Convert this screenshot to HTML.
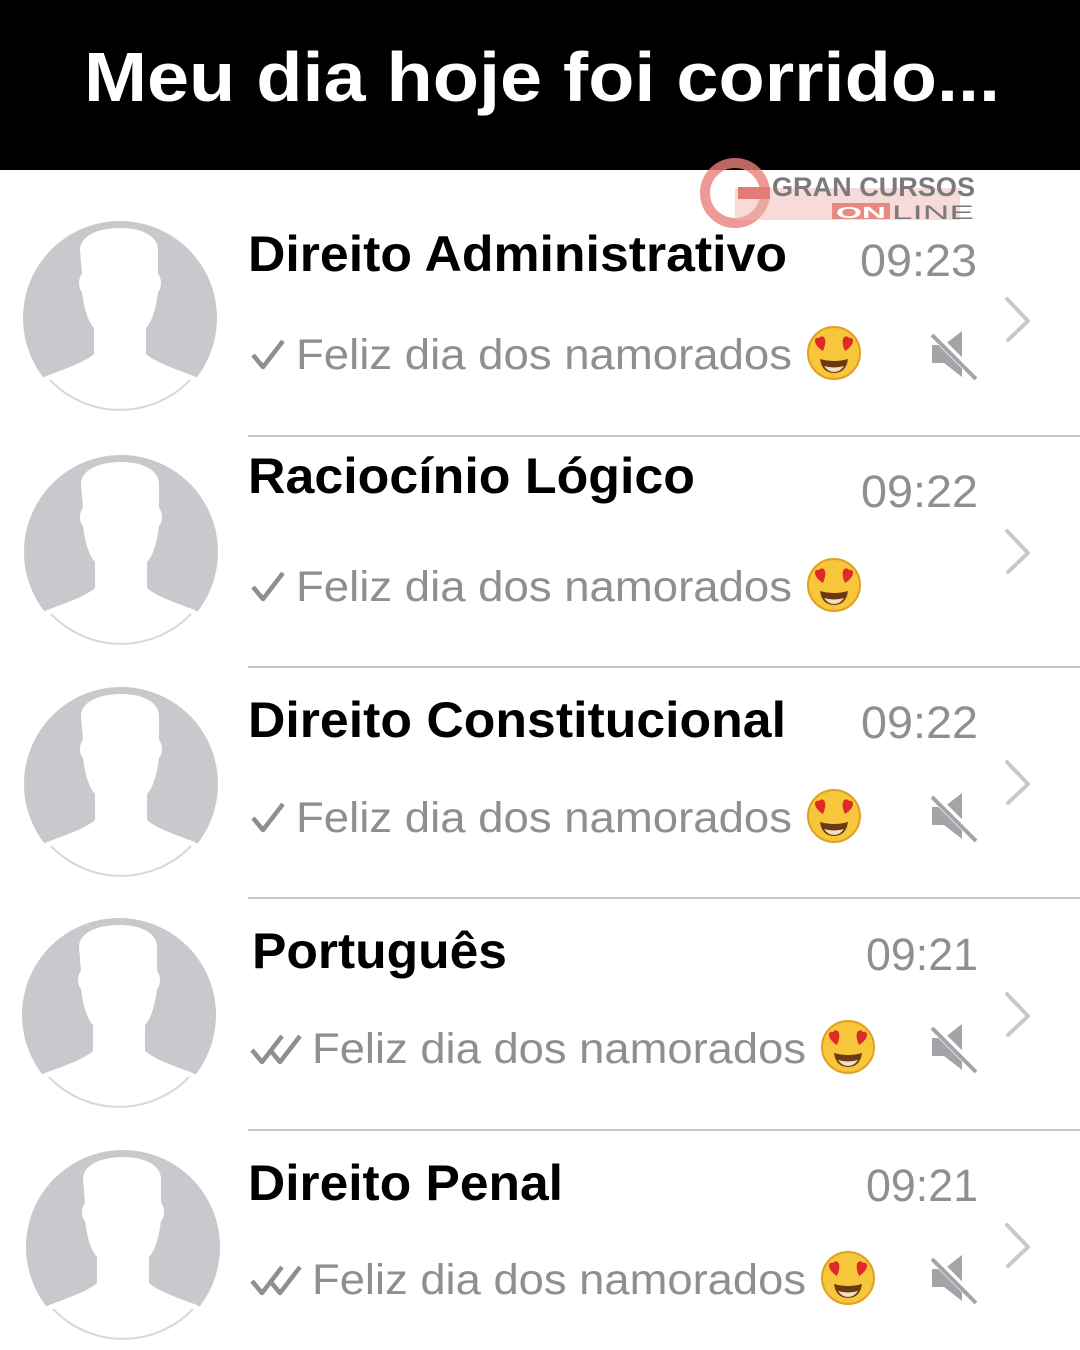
<!DOCTYPE html>
<html><head><meta charset="utf-8"><style>
html,body{margin:0;padding:0;background:#fff;width:1080px;height:1350px;overflow:hidden}
svg{display:block}
</style></head><body>
<svg width="1080" height="1350" viewBox="0 0 1080 1350" xmlns="http://www.w3.org/2000/svg" font-family="'Liberation Sans', Arial, sans-serif">
<defs>
<g id="av">
  <circle cx="0" cy="0" r="97" fill="#c8c8cd"/>
  <path d="M-40,-68 C-40,-82 -22,-90 0,-90 C22,-90 38,-82 38,-68 L38,-44 C42,-40 42,-30 38,-26 C36,-10 32,4 26,10 L26,36 C40,48 70,55 82,62 L82,97 L-82,97 L-82,62 C-70,55 -40,48 -26,36 L-26,10 C-32,4 -36,-10 -38,-26 C-42,-30 -42,-40 -38,-44 Z" fill="#fff"/>
  <path d="M-70,62 A97,97 0 0 0 70,62" fill="none" stroke="#d8d8dc" stroke-width="2"/>
</g>
<g id="emo">
  <circle cx="0" cy="0" r="26" fill="#f7c63a"/>
  <circle cx="0" cy="0" r="26" fill="none" stroke="#e0a020" stroke-width="2"/>
  <path d="M-14,6 Q0,10 14,6 Q12,20 0,20 Q-12,20 -14,6 Z" fill="#6b3a12"/>
  <path d="M-10,13 Q0,16 10,13 Q6,19 0,19 Q-6,19 -10,13Z" fill="#f3e0c0"/>
  <path d="M-11,-2 C-22,-9 -20,-17 -15,-15 C-12,-19 -5,-16 -11,-2 Z" fill="#e02a2a"/>
  <path d="M11,-2 C22,-9 20,-17 15,-15 C12,-19 5,-16 11,-2 Z" fill="#e02a2a"/>
</g>
<g id="mute">
  <path d="M2,14 L14,14 L32,0 L32,46 L14,32 L2,32 Z" fill="#a4a4a8"/>
  <line x1="2" y1="2" x2="48" y2="48" stroke="#fff" stroke-width="8"/>
  <line x1="2" y1="4" x2="46" y2="48" stroke="#a4a4a8" stroke-width="4"/>
</g>
<path id="chev" d="M0,0 L21,22 L1,41" fill="none" stroke="#c9c9cd" stroke-width="4" stroke-linecap="round" stroke-linejoin="round"/>
<path id="chk" d="M0,14 L10,26 L30,0" fill="none" stroke="#8e8e93" stroke-width="4.5" stroke-linejoin="round"/>
</defs>

<rect x="0" y="0" width="1080" height="170" fill="#000"/>
<text x="84" y="101" font-size="70" font-weight="bold" fill="#fff" textLength="916" lengthAdjust="spacingAndGlyphs">Meu dia hoje foi corrido...</text>

<!-- logo -->
<circle cx="735" cy="193" r="30" fill="none" stroke="#e8807a" stroke-width="10" opacity="0.8"/>
<rect x="735" y="188" width="225" height="32" fill="#f0b8b4" opacity="0.5"/>
<rect x="738" y="187" width="32" height="12" fill="#e37c76"/>
<text x="772" y="196" font-size="27" font-weight="bold" fill="#7a7a7a" textLength="203" lengthAdjust="spacingAndGlyphs">GRAN CURSOS</text>
<rect x="832" y="203" width="58" height="16" fill="#e78a84"/>
<text x="836" y="218" font-size="16" font-weight="bold" fill="#fff" textLength="50" lengthAdjust="spacingAndGlyphs">ON</text>
<text x="892" y="219" font-size="19" fill="#7a7a7a" textLength="82" lengthAdjust="spacingAndGlyphs">LINE</text>

<g stroke="#c8c8c8" stroke-width="2">
<line x1="248" y1="436" x2="1080" y2="436"/>
<line x1="248" y1="667" x2="1080" y2="667"/>
<line x1="248" y1="898" x2="1080" y2="898"/>
<line x1="248" y1="1130" x2="1080" y2="1130"/>
</g>

<!-- row 1 -->
<use href="#av" x="120" y="318"/>
<text x="248" y="271" font-size="50" font-weight="bold" fill="#000" textLength="539" lengthAdjust="spacingAndGlyphs">Direito Administrativo</text>
<text x="860" y="276" font-size="45" fill="#8e8e93" textLength="117" lengthAdjust="spacingAndGlyphs">09:23</text>
<use href="#chk" x="253" y="341"/>
<text x="296" y="369" font-size="43" fill="#8e8e93" textLength="496" lengthAdjust="spacingAndGlyphs">Feliz dia dos namorados</text>
<use href="#emo" x="834" y="353"/>
<use href="#mute" x="930" y="331"/>
<use href="#chev" x="1007" y="299"/>

<!-- row 2 -->
<use href="#av" x="121" y="552"/>
<text x="248" y="493" font-size="50" font-weight="bold" fill="#000" textLength="447" lengthAdjust="spacingAndGlyphs">Raciocínio Lógico</text>
<text x="861" y="507" font-size="45" fill="#8e8e93" textLength="117" lengthAdjust="spacingAndGlyphs">09:22</text>
<use href="#chk" x="253" y="573"/>
<text x="296" y="601" font-size="43" fill="#8e8e93" textLength="496" lengthAdjust="spacingAndGlyphs">Feliz dia dos namorados</text>
<use href="#emo" x="834" y="585"/>
<use href="#chev" x="1007" y="531"/>

<!-- row 3 -->
<use href="#av" x="121" y="784"/>
<text x="248" y="737" font-size="50" font-weight="bold" fill="#000" textLength="538" lengthAdjust="spacingAndGlyphs">Direito Constitucional</text>
<text x="861" y="738" font-size="45" fill="#8e8e93" textLength="117" lengthAdjust="spacingAndGlyphs">09:22</text>
<use href="#chk" x="253" y="804"/>
<text x="296" y="832" font-size="43" fill="#8e8e93" textLength="496" lengthAdjust="spacingAndGlyphs">Feliz dia dos namorados</text>
<use href="#emo" x="834" y="816"/>
<use href="#mute" x="930" y="793"/>
<use href="#chev" x="1007" y="762"/>

<!-- row 4 -->
<use href="#av" x="119" y="1015"/>
<text x="252" y="968" font-size="50" font-weight="bold" fill="#000" textLength="255" lengthAdjust="spacingAndGlyphs">Português</text>
<text x="866" y="970" font-size="45" fill="#8e8e93" textLength="112" lengthAdjust="spacingAndGlyphs">09:21</text>
<use href="#chk" x="252" y="1036"/>
<use href="#chk" x="270" y="1036"/>
<text x="312" y="1063" font-size="43" fill="#8e8e93" textLength="494" lengthAdjust="spacingAndGlyphs">Feliz dia dos namorados</text>
<use href="#emo" x="848" y="1047"/>
<use href="#mute" x="930" y="1024"/>
<use href="#chev" x="1007" y="994"/>

<!-- row 5 -->
<use href="#av" x="123" y="1247"/>
<text x="248" y="1200" font-size="50" font-weight="bold" fill="#000" textLength="315" lengthAdjust="spacingAndGlyphs">Direito Penal</text>
<text x="866" y="1201" font-size="45" fill="#8e8e93" textLength="112" lengthAdjust="spacingAndGlyphs">09:21</text>
<use href="#chk" x="252" y="1267"/>
<use href="#chk" x="270" y="1267"/>
<text x="312" y="1294" font-size="43" fill="#8e8e93" textLength="494" lengthAdjust="spacingAndGlyphs">Feliz dia dos namorados</text>
<use href="#emo" x="848" y="1278"/>
<use href="#mute" x="930" y="1255"/>
<use href="#chev" x="1007" y="1225"/>
</svg>
</body></html>
